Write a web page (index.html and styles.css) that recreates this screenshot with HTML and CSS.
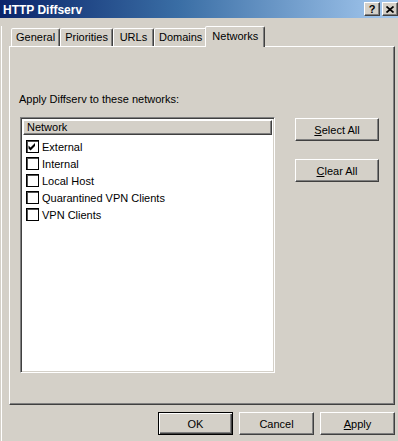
FILE: index.html
```html
<!DOCTYPE html>
<html>
<head>
<meta charset="utf-8">
<title>HTTP Diffserv</title>
<link rel="stylesheet" href="styles.css">
</head>
<body>
<div class="window">
  <div class="titlebar">
    <span class="title">HTTP Diffserv</span>
    <div class="caption-btns">
      <span class="cbtn help">?</span>
      <span class="cbtn close"><svg width="8" height="7" viewBox="0 0 8 7"><path d="M0.5 0.5 L7.5 6.5 M7.5 0.5 L0.5 6.5" stroke="#000" stroke-width="1.7" fill="none"/></svg></span>
    </div>
  </div>
  <div class="client">
    <div class="tabs">
      <div class="tab">General</div>
      <div class="tab">Priorities</div>
      <div class="tab">URLs</div>
      <div class="tab">Domains</div>
      <div class="tab active">Networks</div>
    </div>
    <div class="panel">
      <div class="label">Apply Diffserv to these networks:</div>
      <div class="content">
        <div class="listbox">
          <div class="lv-header">Network</div>
          <div class="lv-rows">
            <div class="row"><span class="cb"><svg width="11" height="11" viewBox="0 0 11 11"><path d="M1.5 4.5 L3.5 6.5 L8 2 L8 5 L3.5 9.5 L1.5 7.5 Z" fill="#000"/></svg></span><span>External</span></div>
            <div class="row"><span class="cb"></span><span>Internal</span></div>
            <div class="row"><span class="cb"></span><span>Local Host</span></div>
            <div class="row"><span class="cb"></span><span>Quarantined VPN Clients</span></div>
            <div class="row"><span class="cb"></span><span>VPN Clients</span></div>
          </div>
        </div>
        <div class="side">
          <button class="btn side-btn"><u>S</u>elect All</button>
          <button class="btn side-btn"><u>C</u>lear All</button>
        </div>
      </div>
    </div>
    <div class="footer">
      <button class="btn foot-btn default">OK</button>
      <button class="btn foot-btn">Cancel</button>
      <button class="btn foot-btn"><u>A</u>pply</button>
    </div>
  </div>
</div>
</body>
</html>
```
FILE: styles.css
```css
html, body {
  margin: 0;
  padding: 0;
}
body {
  width: 398px;
  height: 441px;
  overflow: hidden;
  background: #d4d0c8;
  font-family: "Liberation Sans", Arial, sans-serif;
  font-size: 11px;
  color: #000;
}
.titlebar {
  height: 18px;
  display: flex;
  justify-content: space-between;
  align-items: center;
  padding-left: 3px;
  background: linear-gradient(to right, #0a246a 0%, #3a6ea5 45%, #a6caf0 100%);
}
.title {
  color: #fff;
  font-weight: bold;
  font-size: 12px;
  padding-top: 1px;
}
.caption-btns {
  display: flex;
  gap: 2px;
  align-self: flex-start;
  margin-top: 2px;
}
.cbtn {
  width: 16px;
  height: 14px;
  box-sizing: border-box;
  background: #d4d0c8;
  border: 1px solid;
  border-color: #fff #404040 #404040 #fff;
  box-shadow: inset -1px -1px #808080;
  display: flex;
  align-items: center;
  justify-content: center;
  font-weight: bold;
  font-size: 11px;
  line-height: 12px;
}
.client {
  margin-left: 1px;
  border-left: 1px solid #fff;
  padding-right: 3px;
  height: 423px;
}
.tabs {
  display: flex;
  align-items: flex-end;
  height: 20px;
  margin-top: 8px;
  padding-left: 9px;
}
.tab {
  height: 18px;
  min-width: 41px;
  box-sizing: border-box;
  padding: 0 4px;
  text-align: center;
  border: 1px solid;
  border-bottom: none;
  border-color: #fff #404040 transparent #fff;
  box-shadow: inset -1px 0 #808080;
  border-radius: 2px 2px 0 0;
  line-height: 17px;
  background: #d4d0c8;
}
.tab.active {
  height: 21px;
  margin: 0 -2px -1px -2px;
  padding: 0 6px;
  line-height: 19px;
  position: relative;
  z-index: 1;
}
.panel {
  margin-left: 7px;
  height: 359px;
  box-sizing: border-box;
  border: 1px solid;
  border-color: #fff #404040 #404040 #fff;
  box-shadow: inset -1px -1px #808080;
  padding: 46px 0 0 10px;
}
.label {
  line-height: 13px;
  margin-left: -1px;
}
.content {
  display: flex;
  margin-top: 11px;
}
.listbox {
  width: 255px;
  height: 256px;
  box-sizing: border-box;
  background: #fff;
  border: 1px solid;
  border-color: #808080 #fff #fff #808080;
  box-shadow: inset 1px 1px #404040, inset -1px -1px #d4d0c8;
  padding: 2px;
}
.lv-header {
  height: 15px;
  box-sizing: border-box;
  background: #d4d0c8;
  border: 1px solid;
  border-color: #fff #404040 #404040 #fff;
  box-shadow: inset -1px -1px #808080;
  padding-left: 3px;
  line-height: 13px;
}
.lv-rows {
  padding-top: 3px;
}
.row {
  display: flex;
  align-items: center;
  height: 17px;
  padding-left: 3px;
  gap: 3px;
}
.cb {
  width: 13px;
  height: 13px;
  box-sizing: border-box;
  border: 1px solid #000;
  box-shadow: inset 1px 1px #505050;
  background: #fff;
  display: flex;
}
.side {
  display: flex;
  flex-direction: column;
  gap: 18px;
  margin-left: 20px;
  margin-top: 1px;
}
.btn {
  font: inherit;
  color: #000;
  background: #d4d0c8;
  border: 1px solid;
  border-color: #fff #404040 #404040 #fff;
  box-shadow: inset -1px -1px #808080;
  padding: 0;
  margin: 0;
  box-sizing: border-box;
  height: 23px;
}
.side-btn {
  width: 84px;
}
.footer {
  display: flex;
  justify-content: flex-end;
  gap: 6px;
  margin-top: 7px;
}
.foot-btn {
  width: 75px;
}
.foot-btn.default {
  border: 1px solid #000;
  box-shadow: inset 1px 1px #fff, inset -1px -1px #404040, inset -2px -2px #808080;
}
```
